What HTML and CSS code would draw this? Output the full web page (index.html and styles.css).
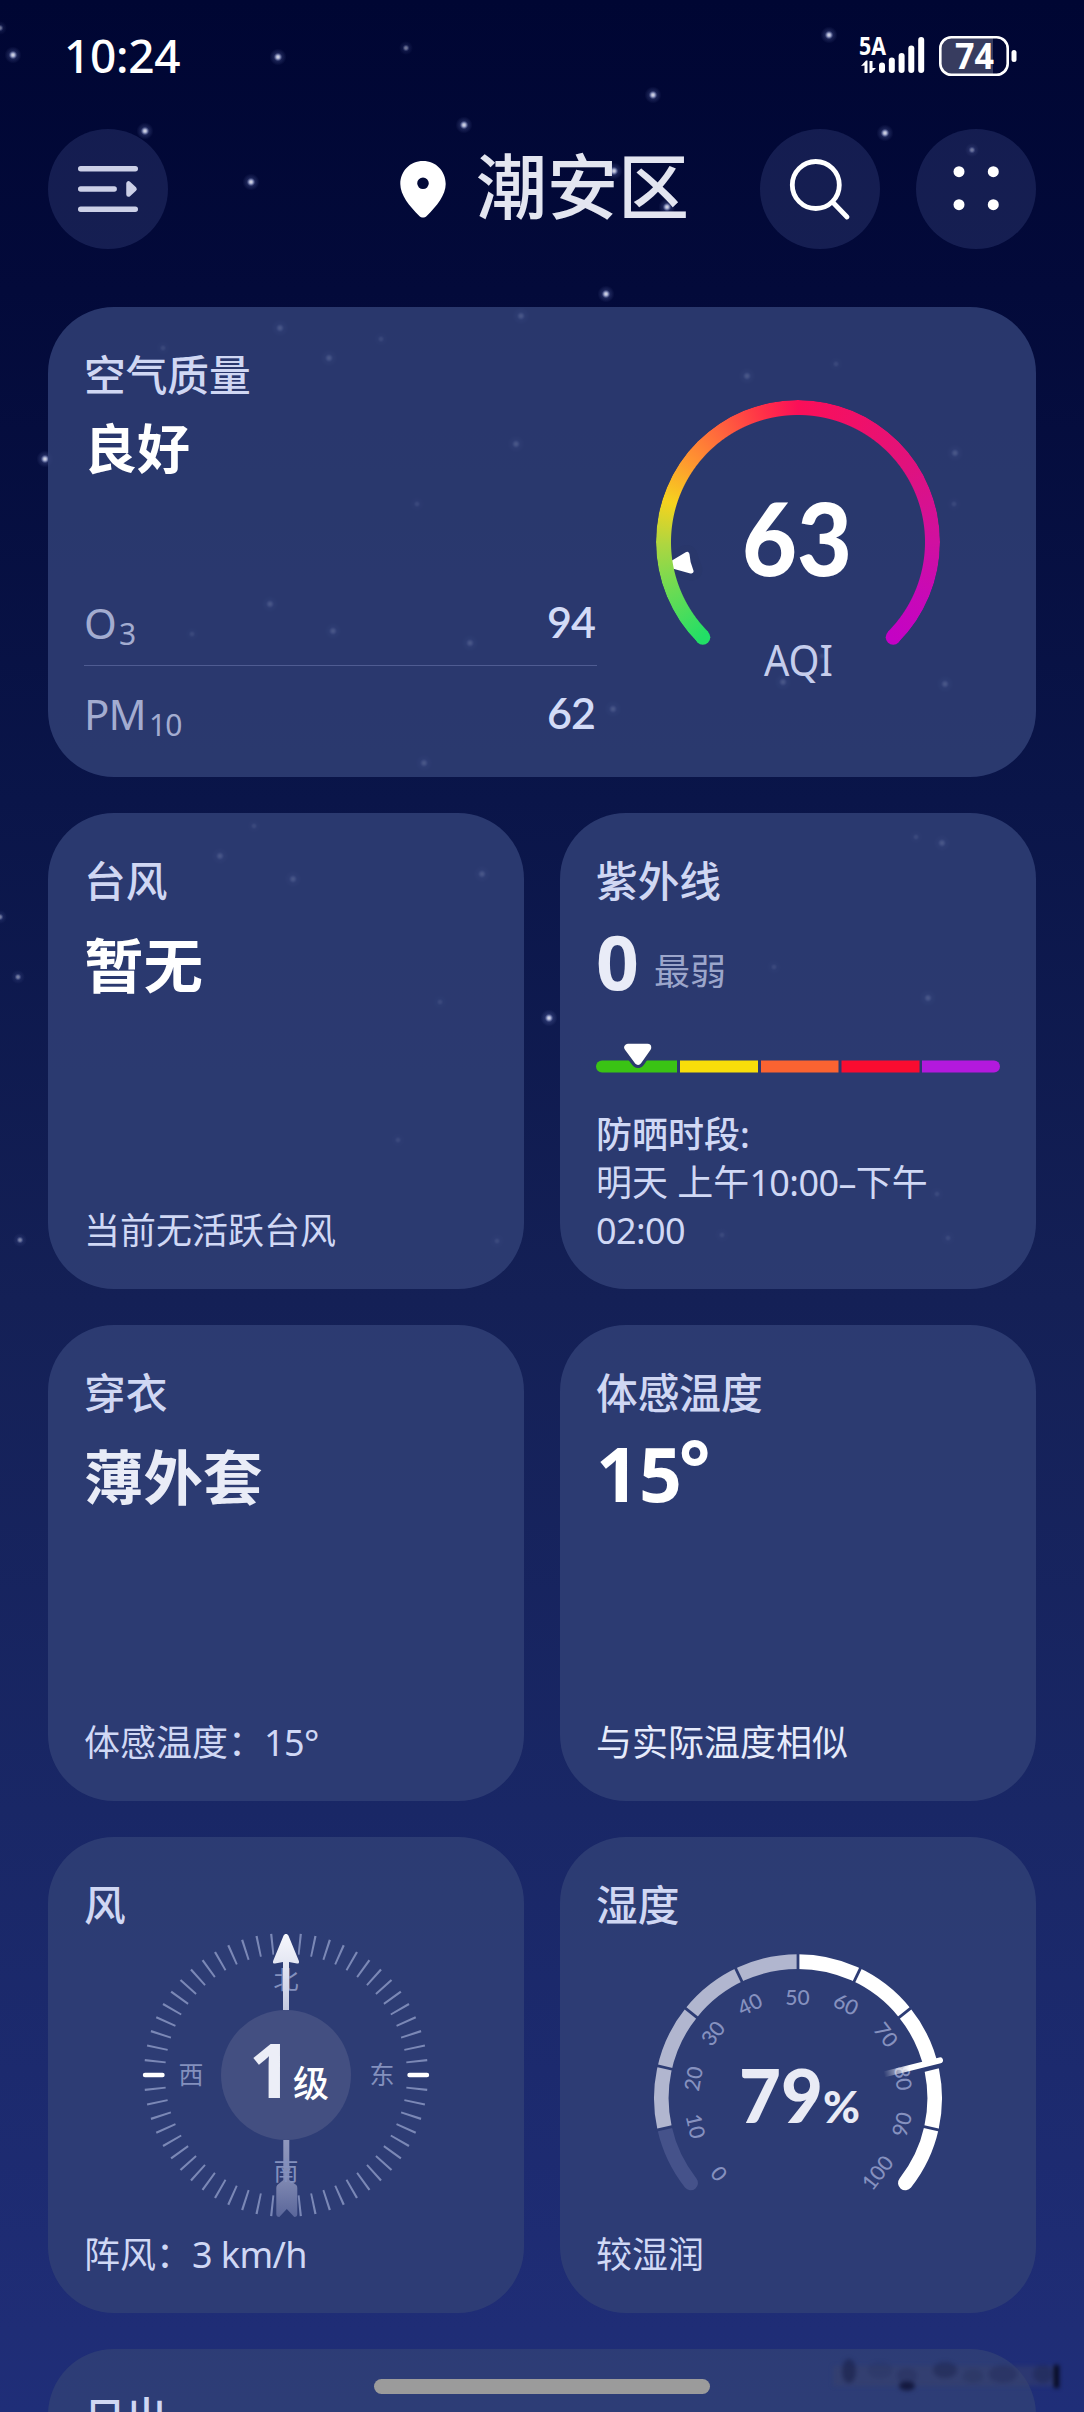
FILE: index.html
```html
<!DOCTYPE html>
<html lang="zh-CN">
<head>
<meta charset="utf-8">
<title>天气</title>
<link rel="stylesheet" href="styles.css">
</head>
<body>
<div class="screen">
  <svg class="sky" viewBox="0 0 1084 2412" aria-hidden="true">
    <defs>
      <radialGradient id="star">
        <stop offset="0" stop-color="#fff"/>
        <stop offset=".22" stop-color="#cdd4f6" stop-opacity=".85"/>
        <stop offset=".5" stop-color="#7f8ed0" stop-opacity=".22"/>
        <stop offset="1" stop-color="#7f8ed0" stop-opacity="0"/>
      </radialGradient>
      <g id="s" opacity=".9"><circle r="8.500" fill="url(#star)"/></g>
      <g id="t" opacity=".5"><circle r="7" fill="url(#star)"/></g>
    </defs>
    <use href="#s" x="13" y="55"/><use href="#s" x="278" y="57"/><use href="#t" x="406" y="48"/><use href="#s" x="145" y="131"/>
    <use href="#s" x="251" y="182"/><use href="#s" x="464" y="125"/><use href="#s" x="829" y="35"/><use href="#s" x="653" y="95"/>
    <use href="#s" x="885" y="133"/><use href="#t" x="972" y="150"/><use href="#s" x="614" y="171"/><use href="#s" x="667" y="207"/>
    <use href="#s" x="45" y="459"/><use href="#s" x="606" y="294"/><use href="#t" x="0" y="28"/>
    <use href="#t" x="163" y="348"/><use href="#s" x="280" y="328"/><use href="#s" x="329" y="358"/><use href="#t" x="381" y="339"/>
    <use href="#s" x="521" y="316"/><use href="#s" x="516" y="444"/><use href="#t" x="417" y="504"/><use href="#s" x="270" y="604"/>
    <use href="#t" x="192" y="634"/><use href="#s" x="333" y="631"/><use href="#s" x="470" y="643"/><use href="#s" x="613" y="709"/>
    <use href="#s" x="424" y="763"/><use href="#s" x="747" y="376"/><use href="#t" x="836" y="364"/><use href="#s" x="955" y="453"/>
    <use href="#t" x="954" y="504"/><use href="#s" x="945" y="684"/><use href="#s" x="783" y="682"/><use href="#t" x="822" y="656"/>
    <use href="#t" x="254" y="826"/><use href="#s" x="220" y="856"/><use href="#s" x="293" y="879"/><use href="#s" x="482" y="874"/>
    <use href="#t" x="440" y="1002"/><use href="#t" x="398" y="1140"/><use href="#t" x="497" y="1241"/><use href="#s" x="942" y="843"/>
    <use href="#t" x="916" y="837"/><use href="#t" x="774" y="967"/><use href="#s" x="928" y="998"/><use href="#t" x="937" y="1194"/>
    <use href="#t" x="722" y="1235"/><use href="#t" x="948" y="1238"/><use href="#s" x="549" y="1018"/><use href="#t" x="18" y="977"/>
    <use href="#t" x="20" y="1240"/><use href="#t" x="0" y="917"/>
  </svg>

  <div class="status">
    <span class="clock">10:24</span>
    <svg class="status-icons" width="162" height="46" viewBox="857 34 162 46" fill="#fff">
      <text class="net" x="859" y="56" textLength="27" lengthAdjust="spacingAndGlyphs">5A</text>
      <path d="M861 67l5-5.500h1.500V74h-3v-7.500zM869.500 62h3v7h3.500l-5 5h-1.500z"/>
      <rect x="879" y="63.500" width="6" height="10.500" rx="3"/>
      <rect x="888.800" y="58.500" width="6" height="15.500" rx="3"/>
      <rect x="898.600" y="54" width="6" height="20" rx="3"/>
      <rect x="908.300" y="46.500" width="6" height="27.500" rx="3"/>
      <rect x="918.200" y="38" width="6" height="36" rx="3"/>
      <path d="M951 39h42v36h-42a10 10 0 0 1-10-10V49a10 10 0 0 1 10-10z" fill="#373c5f"/>
      <rect x="940.300" y="38.300" width="67.400" height="37.400" rx="11" fill="none" stroke="#fff" stroke-width="2.600"/>
      <rect x="1011.500" y="51" width="5" height="12" rx="2.500"/>
      <text class="battery" x="955" y="70" textLength="39" lengthAdjust="spacingAndGlyphs">74</text>
    </svg>
  </div>

  <header class="header">
    <button class="round">
      <svg width="120" height="120" viewBox="0 0 120 120" stroke="#ccd0e7" stroke-width="5.400" stroke-linecap="round" stroke-linejoin="round" fill="#ccd0e7">
        <path d="M32.700 39.800h54.600M32.700 60h33.500M32.700 80.200h54.600" fill="none"/>
        <path d="M80.500 54.500v11l6-5.500z" stroke-width="4.500"/>
      </svg>
    </button>
    <h1 class="place">
      <svg width="46" height="57" viewBox="0 0 46 57" fill="#fff">
        <path fill-rule="evenodd" d="M23 0C10 0 .3 10 .3 23c0 11 9 22 19 32 2.200 2 5.200 2 7.400 0 10-10 19-21 19-32C45.700 10 36 0 23 0zm0 16.500a5.800 5.800 0 1 1 0 11.600 5.800 5.800 0 0 1 0-11.600z"/>
      </svg>
      <span>潮安区</span>
    </h1>
    <button class="round">
      <svg width="120" height="120" viewBox="0 0 120 120" fill="none" stroke="#fff" stroke-width="4.800" stroke-linecap="round">
        <circle cx="55.800" cy="56" r="23.500"/><path d="M73 73.500l14 14.500"/>
      </svg>
    </button>
    <button class="round">
      <svg width="120" height="120" viewBox="0 0 120 120" fill="#fff">
        <circle cx="43" cy="42.700" r="5.500"/><circle cx="77.300" cy="42.700" r="5.500"/><circle cx="43" cy="75.700" r="5.500"/><circle cx="77.300" cy="75.700" r="5.500"/>
      </svg>
    </button>
  </header>

  <main class="grid">
    <section class="card air">
      <div class="air-info">
        <h2 class="title">空气质量</h2>
        <p class="air-level">良好</p>
        <dl class="pollutants">
          <div class="pollutant"><dt>O<small>3</small></dt><dd>94</dd></div>
          <div class="pollutant"><dt>PM<small>10</small></dt><dd>62</dd></div>
        </dl>
      </div>
      <div class="aqi">
        <div class="aqi-ring"></div>
        <svg class="aqi-face" width="290" height="290" viewBox="-145 -145 290 290">
          <circle cx="-95.200" cy="95.200" r="7.500" fill="#22df66"/>
          <circle cx="95.200" cy="95.200" r="7.500" fill="#c402c4"/>
          <path d="M-127 23.500L-111.500 14Q-110 21-106.500 27.500z" fill="#29376b" stroke="#29376b" stroke-width="22" stroke-linejoin="round"/>
          <path d="M-128.500 23L-111 12.500Q-110.500 21.500-107 29z" fill="#fff" stroke="#fff" stroke-width="5" stroke-linejoin="round"/>
          <text class="aqi-value" x="-56" y="33.500" textLength="110" lengthAdjust="spacingAndGlyphs">63</text>
          <text class="aqi-unit" x="-34" y="134" textLength="69" lengthAdjust="spacingAndGlyphs">AQI</text>
        </svg>
      </div>
    </section>

    <section class="card">
      <h2 class="title">台风</h2>
      <p class="value cjk">暂无</p>
      <p class="foot">当前无活跃台风</p>
    </section>

    <section class="card">
      <h2 class="title">紫外线</h2>
      <p class="value num soft">0<small>最弱</small></p>
      <svg class="uv-scale" width="404" height="32" viewBox="0 0 404 32">
        <path d="M6 18.500H81v12H6a6 6 0 0 1 0-12z" fill="#3ac314"/>
        <path d="M84 18.500h78v12H84z" fill="#f8de0a"/>
        <path d="M165 18.500h77.500v12H165z" fill="#fb6331"/>
        <path d="M245.500 18.500H323.500v12h-78z" fill="#f90c30"/>
        <path d="M326 18.500h72a6 6 0 0 1 0 12h-72z" fill="#b319dd"/>
        <path d="M32 6h19L42 19z" fill="#2c3a6e" stroke="#2c3a6e" stroke-width="14" stroke-linejoin="round"/>
        <path d="M32 5.500h19.500L42 19z" fill="#fff" stroke="#fff" stroke-width="7.500" stroke-linejoin="round"/>
      </svg>
      <p class="foot"><b>防晒时段:</b><br>明天 上午<span class="latin">10:00–</span>下午<span class="latin">02:00</span></p>
    </section>

    <section class="card">
      <h2 class="title">穿衣</h2>
      <p class="value soft cjk">薄外套</p>
      <p class="foot">体感温度：<span class="latin">15°</span></p>
    </section>

    <section class="card">
      <h2 class="title">体感温度</h2>
      <p class="value num">15<span class="degree">°</span></p>
      <p class="foot bright">与实际温度相似</p>
    </section>

    <section class="card">
      <h2 class="title">风</h2>
      <svg class="dial" width="404" height="288" viewBox="-202 -144 404 288">
        <defs>
          <linearGradient id="head" x1="0" y1="-141" x2="0" y2="-65" gradientUnits="userSpaceOnUse"><stop offset="0" stop-color="#f7f8fd"/><stop offset="1" stop-color="#c5cae1"/></linearGradient>
          <linearGradient id="tail" x1="0" y1="65" x2="0" y2="142" gradientUnits="userSpaceOnUse"><stop offset="0" stop-color="#8f97bd"/><stop offset=".5" stop-color="#8089b2"/><stop offset="1" stop-color="#5a669a"/></linearGradient>
        </defs>
        <circle r="131.500" fill="none" stroke="#7b88b6" stroke-width="21" pathLength="360" stroke-dasharray=".9 5.100" stroke-dashoffset=".45"/>
        <path d="M-144-3h26v6h-26zM118-3h26v6h-26z" fill="#2d3c74"/>
        <path d="M-141 0h17.500M123.500 0h17.500" stroke="#fff" stroke-width="4.400" stroke-linecap="round"/>
        <path d="M-12-144h24v24h-24zM-11 116h22v28h-22z" fill="#2d3c74"/>
        <g class="dir"><text x="0" y="-86">北</text><text x="96" y="8.500">东</text><text x="-95" y="8.500">西</text></g>
        <circle r="65" fill="#434f81"/>
        <path d="M-3-65v-48l-8 1.500c-1.800.3-2.500-1-1.800-2.800l10.300-25c1-2.400 4-2.400 5 0l10.300 25c.7 1.800 0 3.100-1.800 2.800l-8-1.500v48z" fill="url(#head)"/>
        <path d="M-2.700 65h6v40l7 5q1 1 1 3v26q0 3-3 3L.8 134l-7.500 8q-3 0-3-3v-26q0-2 1-3l6-5z" fill="url(#tail)"/>
        <g class="dir"><text x="0" y="105">南</text></g>
        <text class="wind-num" x="-37" y="22.500">1</text>
        <text class="wind-unit" x="7" y="21.500">级</text>
      </svg>
      <p class="foot">阵风：<span class="latin">3 km/h</span></p>
    </section>

    <section class="card">
      <h2 class="title">湿度</h2>
      <svg class="dial" width="404" height="288" viewBox="-202 -167.300 404 288">
        <defs>
          <linearGradient id="needle" x1="86" y1="-24" x2="143" y2="-38" gradientUnits="userSpaceOnUse"><stop offset="0" stop-color="#fff" stop-opacity="0"/><stop offset=".45" stop-color="#fff"/></linearGradient>
        </defs>
        <!-- ten segments of 25.66 degrees, 0 at the lower left and 50 at the top -->
        <g fill="none" stroke-width="14.600">
          <path d="M-107.300 84.700A136.700 136.700 0 0 1-133.400 29.900" stroke="#45528a" stroke-linecap="round"/>
          <path d="M-133.400 29.900A136.700 136.700 0 0 1 0-136.700" stroke="#b1b6cf"/>
          <path d="M0-136.700A136.700 136.700 0 0 1 133.400 29.900" stroke="#fff"/>
          <path d="M133.400 29.900A136.700 136.700 0 0 1 107.300 84.700" stroke="#fff" stroke-linecap="round"/>
        </g>
        <path d="M0-128v-18" stroke="#2d3c74" stroke-width="2.800" id="gap"/>
        <g><use href="#gap" transform="rotate(25.660)"/><use href="#gap" transform="rotate(51.320)"/><use href="#gap" transform="rotate(77)"/><use href="#gap" transform="rotate(102.650)"/>
        <use href="#gap" transform="rotate(-25.660)"/><use href="#gap" transform="rotate(-51.320)"/><use href="#gap" transform="rotate(-77)"/><use href="#gap" transform="rotate(-102.650)"/></g>
        <g class="marks">
          <text transform="translate(-79 75.500) rotate(52)" y="7.500">0</text>
          <text transform="translate(-102.500 28) rotate(77)" y="7.500">10</text>
          <text transform="translate(-104.500 -19.500) rotate(-80)" y="7.500">20</text>
          <text transform="translate(-85 -65) rotate(-52)" y="7.500">30</text>
          <text transform="translate(-48 -94) rotate(-26)" y="7.500">40</text>
          <text transform="translate(-.5 -101)" y="7.500">50</text>
          <text transform="translate(48 -94) rotate(26)" y="7.500">60</text>
          <text transform="translate(88 -63.500) rotate(52)" y="7.500">70</text>
          <text transform="translate(105 -20) rotate(82)" y="7.500">80</text>
          <text transform="translate(104 26) rotate(-75)" y="7.500">90</text>
          <text transform="translate(79.500 74.500) rotate(-52)" y="7.500">100</text>
        </g>
        <path d="M124-30l20-5" stroke="#2d3c74" stroke-width="8"/>
        <path d="M86-24L142-38" stroke="url(#needle)" stroke-width="6" stroke-linecap="round"/>
        <text class="hum-num" x="-59" y="25" textLength="84" lengthAdjust="spacingAndGlyphs">79</text>
        <text class="hum-unit" x="25" y="25" textLength="37" lengthAdjust="spacingAndGlyphs">%</text>
      </svg>
      <p class="foot">较湿润</p>
    </section>

    <section class="card wide">
      <h2 class="title">日出</h2>
    </section>
  </main>

  <div class="home-bar"></div>
  <svg class="smudge" width="250" height="50" viewBox="0 0 250 50" aria-hidden="true">
    <path d="M8 16h224v20H8z" fill="#39416c" opacity=".5"/>
    <g fill="#14193f">
      <ellipse cx="24" cy="21" rx="7" ry="12" opacity=".5"/><ellipse cx="55" cy="20" rx="12" ry="8" opacity=".12"/><ellipse cx="82" cy="26" rx="10" ry="8" opacity=".2"/><ellipse cx="82" cy="36" rx="8" ry="4.500"/><ellipse cx="120" cy="20" rx="12" ry="8" opacity=".35"/><ellipse cx="148" cy="26" rx="10" ry="7" opacity=".15"/><ellipse cx="178" cy="24" rx="14" ry="9" opacity=".22"/><ellipse cx="218" cy="24" rx="10" ry="9" opacity=".3"/>
      <path d="M229 15h5v23h-5z" fill="#05081c"/>
    </g>
  </svg>
</div>
</body>
</html>
```
FILE: styles.css
```css
* { box-sizing: border-box; }
body, h1, h2, p, dl, dd { margin: 0; }
body {
  font-family: "Noto Sans", "Noto Sans CJK SC", sans-serif;
  color: #fff;
  background: #000633;
}
.screen {
  position: relative;
  width: 1084px;
  height: 2412px;
  overflow: hidden;
  background: linear-gradient(#000633 0, #030a3a 290px, #0a1549 800px, #142056 1300px, #192766 1810px, #1f2d76 2330px, #1f2e78 2412px);
}
.sky { position: absolute; inset: 0; width: 1084px; height: 2412px; }

.status {
  position: relative;
  display: flex;
  justify-content: space-between;
  align-items: center;
  height: 112px;
  padding: 0 65px 0 64px;
}
.clock { margin-top: -3px; font-size: 46px; font-weight: 500; line-height: 60px; letter-spacing: -.3px; }
.status-icons { display: block; overflow: visible; }
.net { font-size: 25px; font-weight: 700; }
.battery { font-size: 35px; font-weight: 700; }

.header {
  position: relative;
  display: flex;
  align-items: center;
  gap: 36px;
  height: 154px;
  padding: 0 48px;
}
.round {
  width: 120px;
  height: 120px;
  padding: 0;
  border: 0;
  border-radius: 50%;
  background: rgba(110, 128, 200, .18);
}
.round svg { display: block; }
.place {
  display: flex;
  flex: 1;
  align-items: center;
  justify-content: flex-end;
  gap: 30px;
  padding-right: 35px;
  font-size: 71px;
  font-weight: 500;
  line-height: 90px;
  color: #e3e5f0;
}
.place span { margin-top: -7px; }

.grid {
  position: relative;
  display: grid;
  grid-template-columns: 476px 476px;
  grid-template-rows: 470px repeat(4, 476px);
  gap: 36px;
  padding: 41px 48px 0;
}
.card {
  display: flex;
  flex-direction: column;
  padding: 40px 36px 34.500px;
  border-radius: 66px;
  background: rgba(48, 63, 117, .85);
}
.title { font-size: 41.700px; font-weight: 500; line-height: 56px; color: #d0d7f3; }
.value { height: 80px; margin-top: 16px; font-size: 59.500px; font-weight: 700; line-height: 80px; white-space: nowrap; }
.soft { color: #e9ecf7; }
.num { margin-top: 12px; margin-bottom: 4px; font-size: 75px; }
.num small { margin-left: 15px; font-size: 36px; font-weight: 400; line-height: 1; color: #9ca6cb; position: relative; top: -5px; }
.degree { position: relative; top: -7px; margin-left: -3px; }
.foot { margin-top: auto; font-size: 36px; line-height: 48px; color: #d0d8f5; }
.foot b { font-weight: 500; }
.latin { letter-spacing: -.6px; }
.bright { color: #e6ebfc; }

.wide { grid-column: span 2; }
.air { grid-column: span 2; flex-direction: row; justify-content: space-between; padding-bottom: 0; }
.air-info { display: flex; flex-direction: column; width: 513px; }
.air-level { margin-top: 11px; font-size: 53px; font-weight: 700; line-height: 70px; }
.pollutants { margin-top: auto; padding-bottom: 15px; }
.pollutant { display: flex; align-items: center; justify-content: space-between; height: 96px; }
.pollutant:first-child { height: 85px; border-bottom: 1.500px solid #4f5c92; }
.pollutant dt { font-size: 42px; font-weight: 400; line-height: 60px; color: #a3acd0; letter-spacing: -.8px; }
.pollutant small { margin-left: 3px; font-size: 30px; position: relative; top: 6px; line-height: 1; }
.pollutant dd { margin: -3px 2px 0 0; font-family: Lato, sans-serif; font-size: 43px; font-weight: 600; color: #d3dbf7; letter-spacing: -1px; }

.aqi { display: grid; width: 290px; height: 290px; margin: 50px 57px 0 0; }
.aqi > * { grid-area: 1 / 1; }
.aqi-ring {
  place-self: center;
  width: 284px;
  height: 284px;
  border-radius: 50%;
  background: conic-gradient(from 225deg, #22df66 0, #78da50 28deg, #aed640 44deg, #f5d31e 62deg, #ff9530 82deg, #ff6a3c 98deg, #ff3048 120deg, #fa0f58 135deg, #f01068 160deg, #e0127c 189deg, #d010a0 225deg, #c808b8 250deg, #c402c4 270deg, transparent 270deg);
  -webkit-mask: radial-gradient(closest-side, transparent 126.500px, #000 127.500px);
  mask: radial-gradient(closest-side, transparent 126.500px, #000 127.500px);
}
.aqi-face { display: block; overflow: visible; }
.aqi-value { font-family: Lato, sans-serif; font-size: 101px; font-weight: 900; fill: #fff; }
.aqi-unit { font-size: 43px; font-weight: 400; fill: #c5cdec; }

.uv-scale { display: block; margin-top: 36.500px; }

.dial { display: block; margin-top: -2px; overflow: visible; }
.dir { font-size: 25px; fill: #8390bd; text-anchor: middle; }
.wind-num { font-size: 75px; font-weight: 700; fill: #eceef7; }
.wind-unit { font-size: 36px; font-weight: 500; fill: #fff; }
.marks { font-family: Lato, sans-serif; font-size: 21px; font-weight: 500; fill: #8691bf; text-anchor: middle; }
.hum-num { font-family: Lato, sans-serif; font-size: 75px; font-weight: 900; fill: #e9ebf5; }
.hum-unit { font-family: Lato, sans-serif; font-size: 44px; font-weight: 900; fill: #e9ebf5; }

.home-bar { position: absolute; left: 374px; top: 2379px; width: 336px; height: 15px; border-radius: 8px; background: #9b9b9b; }
.smudge { position: absolute; left: 825px; top: 2350px; filter: blur(2px); }
```
